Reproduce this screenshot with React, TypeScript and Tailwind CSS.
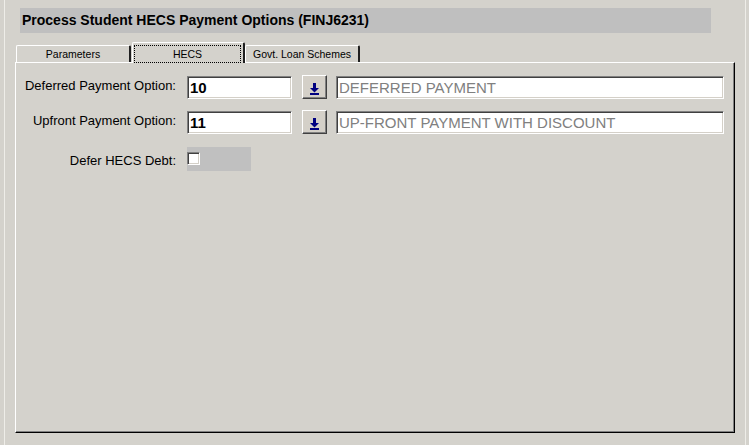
import React from "react";

const sunken =
  "border border-t-[#808080] border-l-[#808080] border-b-white border-r-white shadow-[inset_1px_1px_0_#404040,inset_-1px_-1px_0_#d4d0c8]";
const raised =
  "border border-t-white border-l-white border-b-[#404040] border-r-[#404040] shadow-[inset_-1px_-1px_0_#808080]";

const DownArrow = () => (
  <svg width="9" height="12" viewBox="0 0 9 12" className="block">
    <rect x="3" y="0" width="3" height="5" fill="#000080" />
    <polygon points="0,5 9,5 4.5,9.5" fill="#000080" />
    <rect x="0" y="10" width="9" height="2" fill="#000080" />
  </svg>
);

const LookupRow = ({ label, code, desc }: { label: string; code: string; desc: string }) => (
  <div className="flex items-center h-[24px]">
    <div className="w-[160px] text-right text-[13px] leading-none text-black pb-[3px]">{label}</div>
    <div className={`ml-[11px] w-[105px] h-[23px] bg-white ${sunken} flex items-center pl-[2px] text-[15px] font-bold leading-none text-black`}>
      {code}
    </div>
    <button className={`ml-[10px] w-[25px] h-[24px] bg-[#d4d0c8] ${raised} flex items-center justify-center pt-[3px]`}>
      <DownArrow />
    </button>
    <div className={`ml-[9px] w-[388px] h-[23px] bg-white ${sunken} flex items-center pl-[2px] text-[15px] leading-none text-[#808080]`}>
      {desc}
    </div>
  </div>
);

const Tab = ({ label, active, width }: { label: string; active?: boolean; width: string }) => (
  <div
    className={`${width} ${active ? "h-[21px] -mb-px z-10 bg-[#d4d2cc] items-start" : "h-[17px] items-center"} flex justify-center border-t border-l border-t-white border-l-white border-r-2 border-r-[#202020] rounded-tl-[2px] rounded-tr-[2px]`}
  >
    {active ? (
      <span className="ml-[1px] mr-[2px] mt-[2px] w-full h-[18px] border border-dotted border-black flex items-center justify-center text-[10.5px] leading-none text-black">
        {label}
      </span>
    ) : (
      <span className="text-[10.5px] leading-none text-black">{label}</span>
    )}
  </div>
);

export default function App() {
  return (
    <div
      className="w-[749px] h-[445px] bg-[#d4d2cc] overflow-hidden pl-[4px]"
      style={{ fontFamily: '"Liberation Sans", Arial, sans-serif' }}
    >
      <div className="w-[742px] h-full border-l border-r border-l-[#eeede8] border-r-[#eeede8] pt-[8px]">
        {/* Title */}
        <div className="ml-[15px] w-[691px] h-[25px] bg-[#bfbfbf] pl-[2px]">
          <span className="text-[14px] font-bold leading-[18px] text-black">
            Process Student HECS Payment Options (FINJ6231)
          </span>
        </div>

        {/* Tabs */}
        <div className="ml-[11px] mt-[9px] h-[20px] flex items-end">
          <Tab label="Parameters" width="w-[115px]" />
          <div className="ml-[1px]" />
          <Tab label="HECS" active width="w-[113px]" />
          <Tab label="Govt. Loan Schemes" width="w-[115px]" />
        </div>

        {/* Panel */}
        <div className="ml-[10px] w-[720px] h-[371px] border border-t-white border-l-white border-r-black border-b-black shadow-[inset_-1px_-1px_0_#808080] pt-[12px]">
          <div className="flex flex-col">
            <LookupRow label="Deferred Payment Option:" code="10" desc="DEFERRED PAYMENT" />
            <div className="mt-[11px]">
              <LookupRow label="Upfront Payment Option:" code="11" desc="UP-FRONT PAYMENT WITH DISCOUNT" />
            </div>
            <div className="mt-[13px] flex items-center h-[24px]">
              <div className="w-[160px] text-right text-[13px] leading-none text-black pt-[3px]">Defer HECS Debt:</div>
              <div className="ml-[11px] w-[64px] h-[24px] bg-[#c0c0c0] pt-[5px]">
                <div className={`w-[13px] h-[13px] bg-white ${sunken}`} />
              </div>
            </div>
          </div>
        </div>
      </div>
    </div>
  );
}
